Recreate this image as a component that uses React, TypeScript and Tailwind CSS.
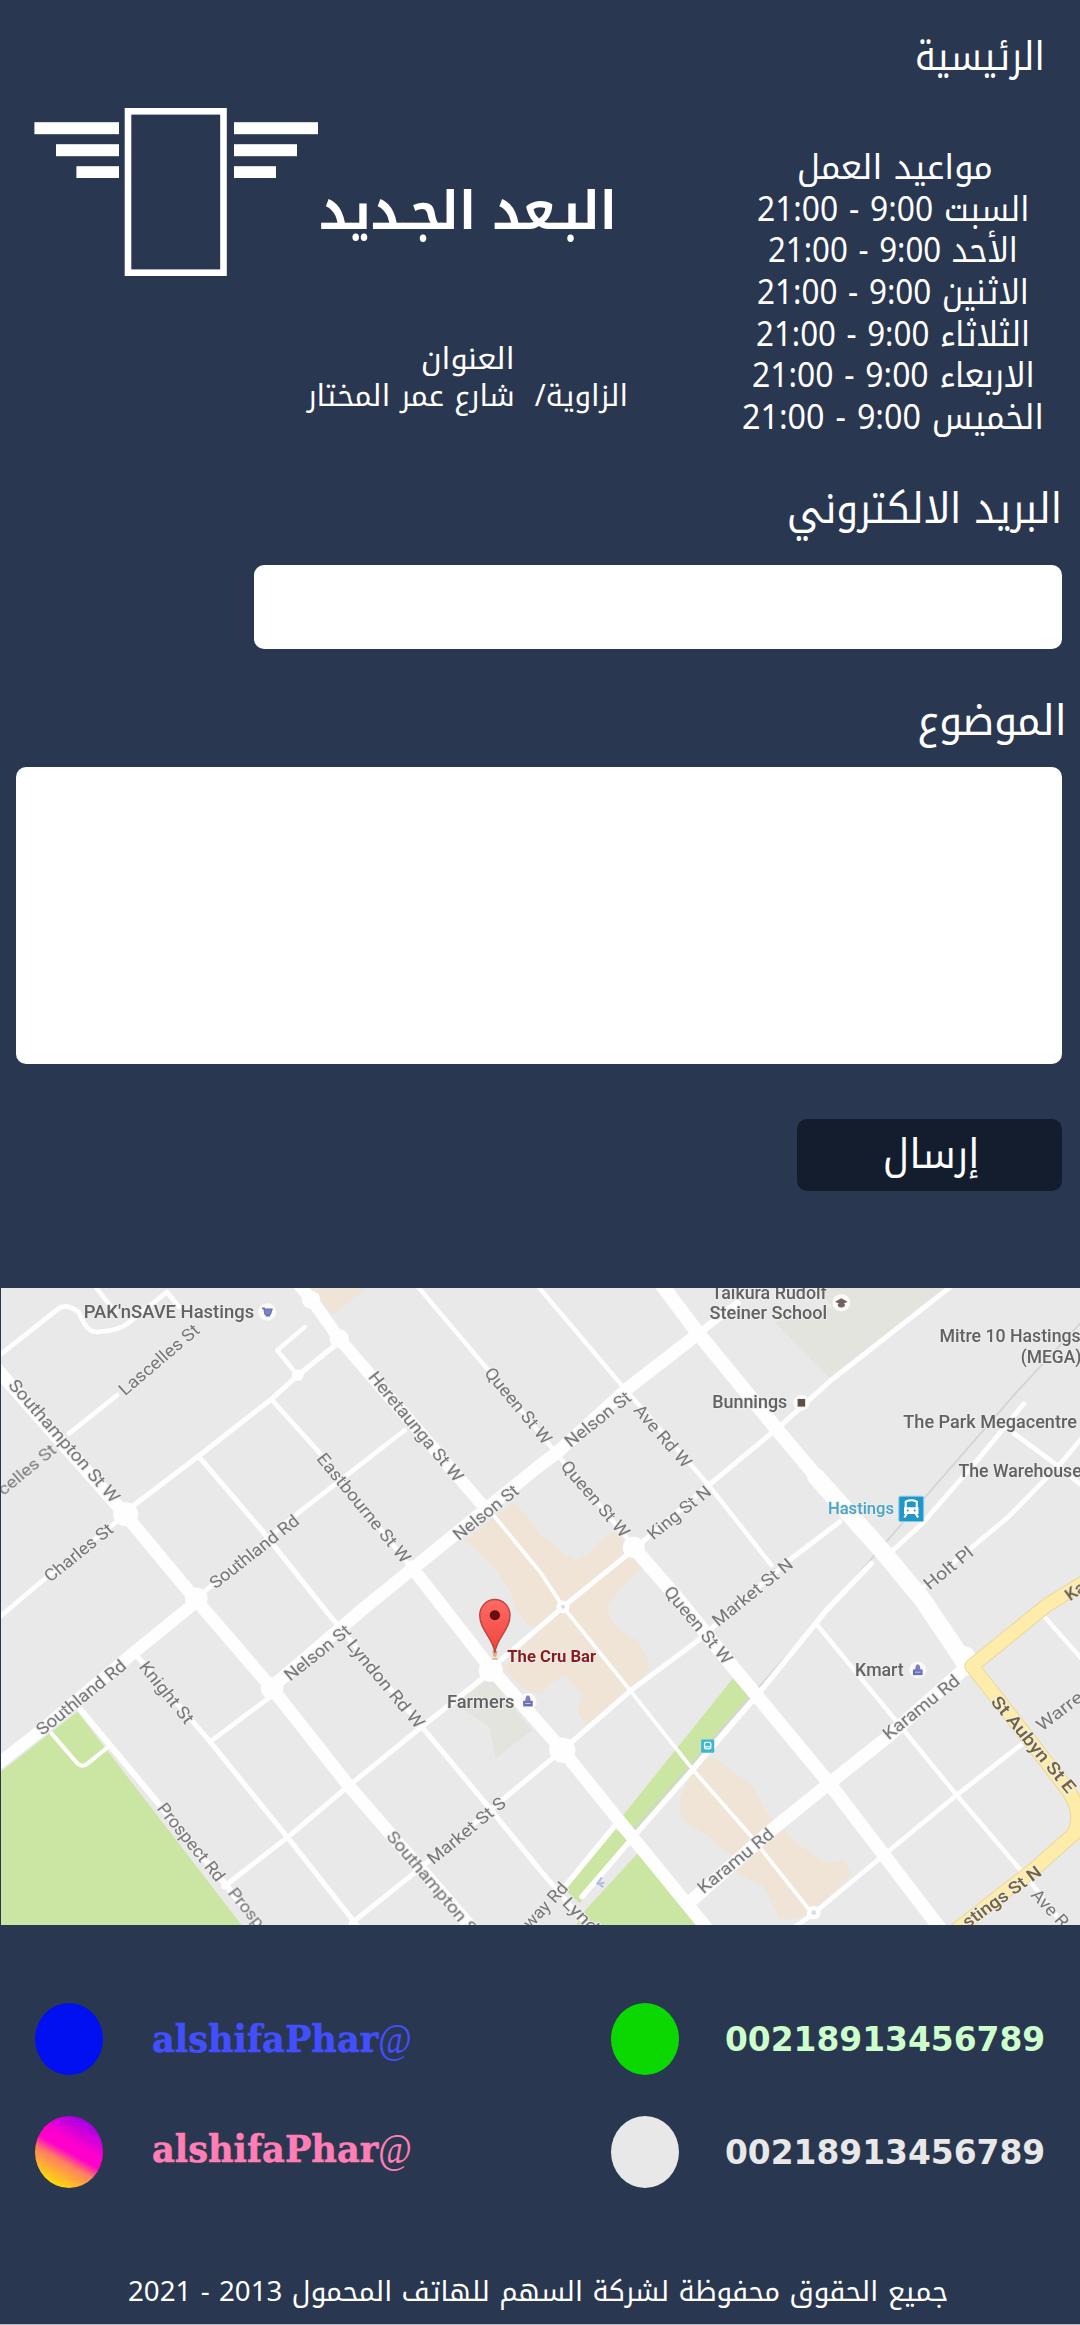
import { useLayoutEffect, useRef, useState } from "react";
import type { ReactNode } from "react";

/** One line of text stretched or condensed to the width of its box. */
function Fit({ className, children, rtl = true }: { className: string; children: ReactNode; rtl?: boolean }) {
  const box = useRef<HTMLDivElement>(null);
  const line = useRef<HTMLSpanElement>(null);
  const [scale, setScale] = useState(1);
  useLayoutEffect(() => {
    if (box.current && line.current) {
      setScale(box.current.offsetWidth / line.current.offsetWidth);
    }
  }, []);
  return (
    <div ref={box} dir="ltr" className={`shrink-0 ${className}`}>
      <span
        ref={line}
        dir={rtl ? "rtl" : "ltr"}
        className="inline-block origin-left whitespace-pre"
        style={{ transform: `scaleX(${scale})` }}
      >
        {children}
      </span>
    </div>
  );
}

function Logo() {
  return (
    <svg className="ml-[34px] mt-[108px] h-[168px] w-[284px]" viewBox="0 0 284 168" fill="#fff">
      <rect x="94" y="3.3" width="95.5" height="161.4" fill="none" stroke="#fff" strokeWidth="6.6" />
      <rect x="0.4" y="14.2" width="84.6" height="12" />
      <rect x="22" y="36.2" width="63" height="12" />
      <rect x="42.4" y="58.2" width="42.6" height="11.8" />
      <rect x="200" y="14.2" width="84" height="12" />
      <rect x="200" y="36.2" width="63" height="12" />
      <rect x="200" y="58.2" width="42" height="11.8" />
    </svg>
  );
}

type LabelProps = { t: string; p: [number, number, number, number]; c?: string; s?: number; w?: number };

/** Map label whose centre line runs from (x1,y1) to (x2,y2). */
function Label({ t, p, c = "#777777", s = 51, w = 400 }: LabelProps) {
  const [x1, y1, x2, y2] = p;
  const len = Math.hypot(x2 - x1, y2 - y1);
  const angle = (Math.atan2(y2 - y1, x2 - x1) * 180) / Math.PI;
  return (
    <text
      transform={`translate(${x1} ${y1}) rotate(${angle})`}
      y={s * 0.33}
      fontSize={s}
      fontWeight={w}
      fill={c}
      stroke="#ededed"
      strokeWidth="6"
      strokeLinejoin="round"
      paintOrder="stroke"
      textLength={len}
      lengthAdjust="spacingAndGlyphs"
    >
      {t}
    </text>
  );
}

const wideRoads: [string, number][] = [
  ["M-10 295L365 735L570 990L790 1255L1015 1550L1400 2010", 38],
  ["M865 40L905 88L985 205L1410 715", 36],
  ["M1195 890L1425 1195L1633 1440L1835 1700L2080 2010", 38],
  ["M-10 1485L120 1380L385 1150L570 995", 36],
  ["M790 1250L1050 1020L1330 785L1568 585L1620 545L1828 350L2028 190", 38],
  ["M2028 190L2140 100", 22],
  ["M1838 830L1960 975L2128 1190L2408 1540L2740 1990", 40],
  ["M1915 35L2028 190L2258 480L2400 655", 42],
  ["M2370 620L2560 840L2680 990L2810 1190", 52],
  ["M2010 1890L2240 1680L2408 1540L2578 1400L2818 1180", 38],
];

const thinRoads: [string, number][] = [
  ["M-10 262L170 115Q190 98 228 125L245 160Q262 190 290 184Q340 182 370 160L485 65L520 110", 14],
  ["M270 40L335 125", 13],
  ["M340 375L200 490", 14],
  ["M385 708L580 555L790 385L865 315L985 215", 15],
  ["M885 170L805 240L865 315", 13],
  ["M790 390L930 550L1200 900", 14],
  ["M578 560L760 780L945 1020L1225 1370L1410 1600L1568 1800L1700 1960", 15],
  ["M570 985L870 725L1175 480", 14],
  ["M-10 1048L125 930L350 745", 14],
  ["M785 1280L610 1415", 14],
  ["M1425 1205L1225 1370L1015 1545L835 1702L650 1850", 15],
  ["M1425 1195L1568 1070L1635 1010L1838 840L2058 645L2268 465L2413 330L2765 45", 15],
  ["M1633 1440L1833 1260L2028 1110L2298 865L2438 755", 15],
  ["M1633 1440L1470 1580L1190 1820L1020 1960", 15],
  ["M400 1160L610 1415L835 1702L1040 1970", 15],
  ["M235 1320L460 1600L660 1850L760 1980", 18],
  ["M150 1390L225 1480Q238 1492 252 1482L315 1430", 12],
  ["M1425 725L1568 905L1635 1010L1833 1265L2013 1500L2178 1695L2358 1930", 11],
  ["M1210 45L1410 290L1600 530L1838 825", 13],
  ["M1560 45L1818 360L2058 645L2240 885", 13],
  ["M2973 400L2838 570L2678 760L2588 845", 14],
  ["M2530 880L2400 1020L2203 1270L2010 1500L1848 1690L1690 1880", 16],
  ["M1783 1670L1640 1850", 16],
  ["M2945 490L3063 580L3140 645", 14],
  ["M3140 505L3078 582L2928 740L2818 835L2670 960", 14],
  ["M2373 1065L2608 1360L2778 1575L2988 1830L3100 1980", 13],
  ["M3033 1040L3140 1165", 13],
  ["M2970 1420L2778 1575L2578 1745L2363 1930L2310 1970", 14],
];

const junctions: [number, number, number][] = [
  [365, 732, 36], [570, 985, 33], [790, 1255, 33], [1425, 1200, 35], [1633, 1440, 38],
  [1840, 832, 32], [985, 205, 28], [903, 88, 27], [865, 315, 17], [1635, 1010, 19], [2363, 1928, 20],
  [2800, 1160, 32],
];

const labels: LabelProps[] = [
  { t: "Southampton St W", p: [35, 335, 338, 690] },
  { t: "Lascelles St", p: [352, 365, 572, 172] },
  { t: "celles St", p: [0, 665, 157, 532] },
  { t: "Charles St", p: [135, 925, 322, 770] },
  { t: "Southland Rd", p: [615, 945, 862, 745] },
  { t: "Eastbourne St W", p: [930, 555, 1182, 872] },
  { t: "Heretaunga St W", p: [1080, 310, 1335, 628] },
  { t: "Nelson St", p: [1322, 800, 1500, 655] },
  { t: "Queen St W", p: [1417, 298, 1592, 515] },
  { t: "Nelson St", p: [1646, 520, 1826, 375] },
  { t: "Ave Rd W", p: [1850, 410, 1998, 585] },
  { t: "Queen St W", p: [1638, 578, 1818, 795] },
  { t: "King St N", p: [1886, 798, 2058, 657] },
  { t: "Market St N", p: [2075, 1058, 2296, 875] },
  { t: "Queen St W", p: [1938, 955, 2116, 1175] },
  { t: "Holt Pl", p: [2688, 948, 2820, 840] },
  { t: "Southland Rd", p: [112, 1385, 360, 1180] },
  { t: "Knight St", p: [415, 1180, 552, 1355] },
  { t: "Nelson St", p: [832, 1222, 1012, 1075] },
  { t: "Lyndon Rd W", p: [1017, 1115, 1222, 1368] },
  { t: "Market St S", p: [1247, 1773, 1462, 1592] },
  { t: "Southampton S", p: [1132, 1690, 1375, 1985] },
  { t: "Prospect Rd", p: [467, 1605, 642, 1828] },
  { t: "Prosp", p: [672, 1860, 758, 1968] },
  { t: "way Rd", p: [1528, 1968, 1640, 1845] },
  { t: "Lynd", p: [1642, 1890, 1730, 1980] },
  { t: "Karamu Rd", p: [2032, 1860, 2240, 1685] },
  { t: "Karamu Rd", p: [2570, 1398, 2780, 1225] },
  { t: "Warre", p: [3015, 1372, 3138, 1275] },
  { t: "Ave R", p: [3003, 1865, 3094, 1965] },
];

const places: { t: string; x: number; y: number; w: number }[] = [
  { t: "PAK'nSAVE Hastings", x: 243, y: 126, w: 495 },
  { t: "Taikura Rudolf", x: 2066, y: 68, w: 335 },
  { t: "Steiner School", x: 2060, y: 130, w: 342 },
  { t: "Mitre 10 Hastings", x: 2728, y: 198, w: 410 },
  { t: "(MEGA)", x: 2964, y: 261, w: 176 },
  { t: "Bunnings", x: 2068, y: 397, w: 218 },
  { t: "The Park Megacentre", x: 2623, y: 455, w: 504 },
  { t: "The Warehouse", x: 2783, y: 603, w: 358 },
  { t: "Kmart", x: 2483, y: 1200, w: 141 },
  { t: "Farmers", x: 1298, y: 1295, w: 196 },
];

function Bag({ x, y }: { x: number; y: number }) {
  return (
    <g transform={`translate(${x} ${y})`}>
      <circle r="25" fill="#fafafa" />
      <path d="M-14 -2H14V15H-14Z" fill="#6a6fb5" />
      <path d="M-8 0Q-7 -18 0 -18T8 0Z" fill="#7a7fbd" />
      <path d="M-8 6H8" stroke="#c9cbe6" strokeWidth="3" />
    </g>
  );
}

function StreetMap() {
  return (
    <svg
      className="ml-px mt-[97px] h-[637px] w-[1079px] shrink-0"
      viewBox="3 53 3133 1912"
      preserveAspectRatio="none"
      fontFamily="Roboto, sans-serif"
    >
      <defs>
        <filter id="soft" x="0" y="0" width="100%" height="100%">
          <feGaussianBlur stdDeviation="2.1" />
        </filter>
        <linearGradient id="pin" x1="0" y1="0" x2="0" y2="1">
          <stop offset="0" stopColor="#ff6a63" />
          <stop offset="1" stopColor="#ee453c" />
        </linearGradient>
      </defs>
      <rect x="3" y="53" width="3133" height="1912" fill="#e9e9e9" />
      <g filter="url(#soft)">
        <rect x="-20" y="30" width="3200" height="1960" fill="#e9e9e9" />
        <path d="M2350 40H2775L2415 330L2250 155L2420 110Z" fill="#e3e4dd" />
        <path d="M1335 1290L1425 1225L1545 1380L1440 1465L1420 1370L1350 1320Z" fill="#e3e4dd" />
        <g fill="#f0e4d6">
          <path d="M880 45H985L935 95ZM935 95L985 50H1065L1010 100L965 135Z" />
          <path d="M1350 810L1490 695L1535 740L1568 795L1610 820L1640 855L1670 870L1710 850L1740 810L1785 785L1838 840L1875 880L1800 960L1762 1010L1775 1050L1800 1080L1850 1110L1880 1160L1885 1200L1835 1255L1780 1310L1700 1365L1675 1320L1690 1280L1665 1240L1645 1215L1600 1240L1568 1275L1520 1255L1460 1190L1568 1080L1530 1060L1495 1010L1480 960L1440 900Z" />
          <path d="M2068 1460L2098 1480L2188 1550L2228 1630L2328 1730L2398 1780L2448 1770L2475 1810L2398 1890L2318 1945L2268 1950L2218 1850L2138 1810L2128 1760L2058 1700L1978 1650L1973 1590L1998 1530L2038 1480Z" />
        </g>
        <g fill="#cae6a2">
          <path d="M-10 1515L225 1325L720 1990H-10Z" />
          <path d="M2128 1225L2175 1280L1853 1685L1806 1640Z" />
          <path d="M1783 1672L1823 1710L1683 1900L1640 1858Z" />
          <path d="M1853 1748L2060 1990H1660L1700 1920Z" />
        </g>
        <path d="M3140 155L2948 370L2430 985L2200 1255L1830 1690" fill="none" stroke="#d3d4d5" strokeWidth="5" />
        <g fill="none" stroke="#fefefe" strokeLinecap="round" strokeLinejoin="round">
          {thinRoads.map(([d, w]) => <path key={d} d={d} strokeWidth={w} />)}
          {wideRoads.map(([d, w]) => <path key={d} d={d} strokeWidth={w} />)}
        </g>
        {junctions.map(([x, y, r]) => <circle key={`${x}-${y}`} cx={x} cy={y} r={r} fill="#fefefe" />)}
        <circle cx="1635" cy="1010" r="6" fill="#dcdcdc" />
        <circle cx="2363" cy="1928" r="7" fill="#dcdcdc" />
        <g fill="none" strokeLinejoin="round">
          <path d="M3160 928L3040 1005L2822 1188L2900 1290L3090 1545Q3150 1620 3120 1690L3005 1795L2740 2010" stroke="#e9d89c" strokeWidth="44" />
          <path d="M3160 928L3040 1005L2822 1188L2900 1290L3090 1545Q3150 1620 3120 1690L3005 1795L2740 2010" stroke="#feedaa" strokeWidth="38" />
        </g>

        {labels.map((l, i) => <Label key={i} {...l} />)}
        <Label t="Karamu" p={[3098, 980, 3240, 880]} c="#6d5a2c" w={500} />
        <Label t="St Aubyn St E" p={[2888, 1285, 3113, 1562]} c="#75643a" w={500} />
        <Label t="stings St N" p={[2800, 1962, 3018, 1800]} c="#75643a" w={500} />
        {places.map((m) => <Label key={m.t} t={m.t} p={[m.x, m.y, m.x + m.w, m.y]} c="#626262" s={53} w={500} />)}
        <Label t="Hastings" p={[2404, 714, 2596, 714]} c="#48a5c8" s={48} w={500} />
        <Label t="The Cru Bar" p={[1473, 1158, 1731, 1158]} c="#8c1d1d" s={50} w={700} />

        <g transform="translate(776 125)">
          <circle r="26" fill="#fafafa" />
          <path d="M-15 -11H-9L-6 6H9L13 -8H-8M-5 11H8" fill="none" stroke="#6a6fb5" strokeWidth="5" />
          <path d="M-8 -7H12L9 4H-6Z" fill="#7d81bd" />
        </g>
        <g transform="translate(2443 97)">
          <circle r="26" fill="#fafafa" />
          <path d="M-18 -3L0 -13L18 -3L0 7Z" fill="#75605c" />
          <path d="M-10 4V11Q0 18 10 11V4" fill="#75605c" />
        </g>
        <circle cx="2327" cy="398" r="24" fill="#fafafa" />
        <rect x="2316" y="386" width="22" height="23" fill="#5f5048" />
        <Bag x={2665} y={1200} />
        <Bag x={1533} y={1294} />

        <g transform="translate(2610 678)">
          <rect width="72" height="76" rx="5" fill="#2496c8" stroke="#7ecde8" strokeWidth="3" />
          <path d="M20 16Q36 8 52 16V50H20Z" fill="none" stroke="#fff" strokeWidth="6" />
          <path d="M18 36H54V50H18ZM24 50L16 64M48 50L56 64" fill="#fff" stroke="#fff" strokeWidth="6" />
          <circle cx="26" cy="43" r="3" fill="#2496c8" />
          <circle cx="46" cy="43" r="3" fill="#2496c8" />
        </g>
        <g transform="translate(2036 1408)">
          <rect width="38" height="40" rx="4" fill="#3fb4d8" />
          <rect x="10" y="9" width="18" height="19" rx="4" fill="none" stroke="#e8f8fc" strokeWidth="4" />
          <path d="M10 22H28" stroke="#e8f8fc" strokeWidth="4" />
        </g>
        <path d="M1733 1842L1755 1838M1733 1842L1748 1822M1736 1838L1752 1852" stroke="#b7bcdd" strokeWidth="6" />

        <path d="M1429 1142H1445L1441 1160H1433ZM1429 1164H1445V1169H1429Z" fill="#dcae80" />
        <path d="M1437 1148C1433 1105 1393 1080 1393 1035A44 47 0 0 1 1481 1035C1481 1080 1441 1105 1437 1148Z" fill="url(#pin)" stroke="#b8443d" strokeWidth="4" />
        <circle cx="1437" cy="1035" r="15" fill="#690b0b" />
      </g>
    </svg>
  );
}

const hours: [string, string][] = [
  ["مواعيد العمل", "ml-[4px] w-[196px]"],
  ["السبت 9:00 - 21:00", "w-[272px]"],
  ["الأحد 9:00 - 21:00", "w-[250px]"],
  ["الاثنين 9:00 - 21:00", "w-[272px]"],
  ["الثلاثاء 9:00 - 21:00", "w-[274px]"],
  ["الاربعاء 9:00 - 21:00", "w-[283px]"],
  ["الخميس 9:00 - 21:00", "w-[302px]"],
];

type ContactProps = { dot: string; handle: string; phoneDot: string; phone: string };

function Contact({ dot, handle, phoneDot, phone }: ContactProps) {
  return (
    <div className="flex h-[72px] items-center pl-[35px]">
      <div className={`h-[72px] w-[68px] rounded-[50%] ${dot}`} />
      <div className={`ml-[49px] flex ${handle}`}>
        <Fit
          rtl={false}
          className="h-[52px] w-[226px] font-['DejaVu_Serif'] text-[38px] leading-[52px] font-bold [-webkit-text-stroke:0.6px_currentColor]"
        >
          alshifaPhar
        </Fit>
        <Fit rtl={false} className="h-[52px] w-[34px] font-['Liberation_Serif'] text-[43px] leading-[52px] italic">
          @
        </Fit>
      </div>
      <div className={`ml-[199px] h-[72px] w-[68px] rounded-[50%] ${phoneDot}`} />
      <Fit
        rtl={false}
        className={`ml-[46px] h-[48px] w-[320px] font-['DejaVu_Sans'] text-[34px] leading-[48px] font-bold ${phone}`}
      >
        00218913456789
      </Fit>
    </div>
  );
}

export default function App() {
  return (
    <div className="flex h-[2325px] w-[1080px] flex-col overflow-hidden border-b border-[#b4bac4] bg-[#2a3750] font-['Noto_Kufi_Arabic','Noto_Sans','DejaVu_Sans',sans-serif] text-white">
      <header className="flex h-[479px] shrink-0">
        <div className="w-[318px] shrink-0">
          <Logo />
        </div>
        <div className="flex w-[299px] shrink-0 flex-col items-center pt-[182px]">
          <Fit className="h-[60px] w-[298px] text-[52px] leading-[60px] font-bold">البـعد الجـديد</Fit>
          <Fit className="mt-[99px] h-[37px] w-[94px] text-[30px] leading-[37px]">العنوان</Fit>
          <Fit className="h-[37px] w-[321px] text-[30px] leading-[37px]">{"الزاوية/  شارع عمر المختار"}</Fit>
        </div>
        <div className="ml-auto mr-[36px] flex w-[302px] flex-col items-center pt-[29px]">
          <Fit className="mb-[62px] -mr-px h-[56px] w-[130px] self-end text-[40px] leading-[56px]">الرئيسية</Fit>
          {hours.map(([text, width]) => (
            <Fit key={text} className={`h-[41.67px] text-[34px] leading-[41.67px] ${width}`}>{text}</Fit>
          ))}
        </div>
      </header>

      <form className="flex shrink-0 flex-col items-end pr-[18px]">
        <Fit className="h-[60px] w-[275px] text-[42px] leading-[60px]">البريد الالكتروني</Fit>
        <input className="mt-[26px] h-[84px] w-[808px] rounded-[10px] bg-white" />
        <Fit className="mt-[42px] -mr-[5px] h-[60px] w-[150px] text-[42px] leading-[60px]">الموضوع</Fit>
        <textarea className="mt-[16px] h-[297px] w-[1046px] resize-none rounded-[10px] bg-white" />
        <button type="button" className="mt-[55px] flex h-[72px] w-[265px] items-start justify-center rounded-[10px] bg-[#131d2e] pl-[2px] pt-[2px]">
          <Fit className="h-[66px] w-[96px] text-[41px] leading-[66px]">إرسال</Fit>
        </button>
      </form>

      <StreetMap />

      <footer className="flex flex-col pt-[78px]">
        <Contact dot="bg-[#0010f0]" handle="text-[#424ffc]" phoneDot="bg-[#0bd800]" phone="text-[#ccffcc]" />
        <div className="mt-[41px]">
          <Contact
            dot="bg-[linear-gradient(29deg,#ffe600_10%,#ff8060_38%,#ff00cc_50%,#ff00cc_60%,#8a00ee_95%)]"
            handle="text-[#ff7eb5] mb-[6px]"
            phoneDot="bg-[#e8e8e8]"
            phone="text-[#e8e8e8]"
          />
        </div>
        <Fit className="mt-[84px] ml-[128px] h-[40px] w-[820px] text-[28px] leading-[40px]">
          جميع الحقوق محفوظة لشركة السهم للهاتف المحمول 2013 - 2021
        </Fit>
      </footer>
    </div>
  );
}
